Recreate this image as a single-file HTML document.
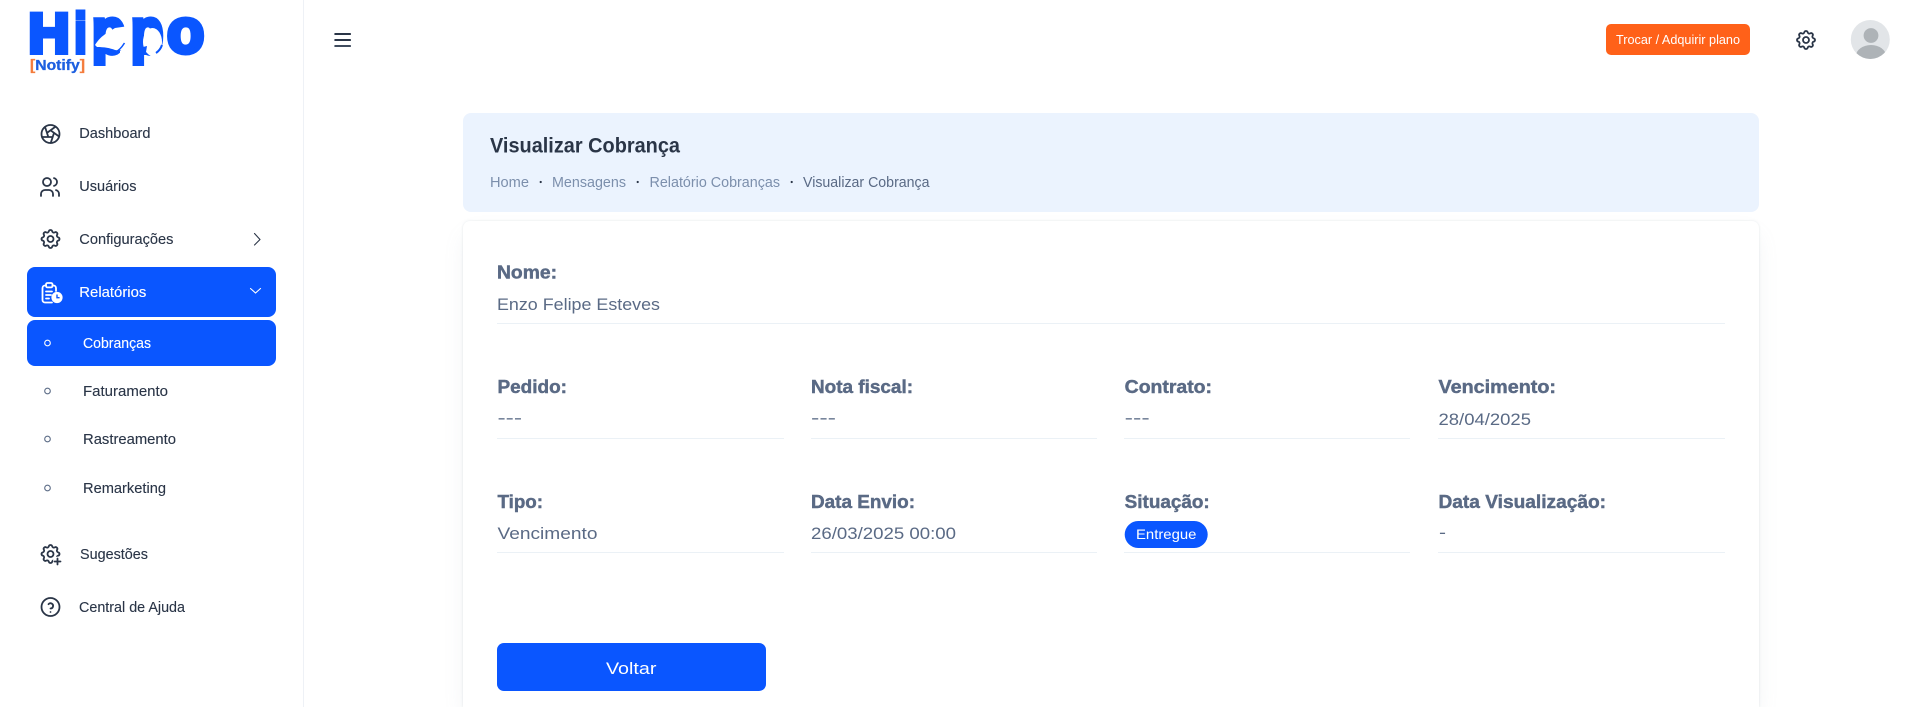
<!DOCTYPE html>
<html lang="pt-BR"><head><meta charset="utf-8"><title>Visualizar Cobrança</title>
<style>
html,body{margin:0;padding:0;width:1918px;height:707px;overflow:hidden;background:#fff}
#wrap{position:relative;width:1918px;height:707px;overflow:hidden;background:#fff}
#card{position:absolute;left:463px;top:221px;width:1296px;height:486px;background:#fff;border-radius:7px 7px 0 0;box-shadow:0 0 2px rgba(145,158,171,.25),0 12px 24px -4px rgba(145,158,171,.14)}
svg{position:absolute;left:0;top:0;display:block}
text{font-family:"Liberation Sans",sans-serif}
.n{font-size:15px;fill:#2a3547;stroke:#2a3547;stroke-width:.12}
.w{font-size:15px;fill:#fff;stroke:#fff;stroke-width:.12}
.l{font-size:18.5px;font-weight:700;fill:#5a6a85;stroke:#5a6a85;stroke-width:.45}
.v{font-size:17px;fill:#5a6a85}
.b{font-size:14.5px;fill:#7c8fac}
.i{fill:none;stroke:#2a3547;stroke-width:1.8;stroke-linecap:round;stroke-linejoin:round}
.logo{font-weight:700;fill:#0a56ff;stroke:#0a56ff;stroke-width:5}
</style></head><body>
<div id="wrap">
<div id="card"></div>
<svg width="1918" height="707" viewBox="0 0 1918 707" xmlns="http://www.w3.org/2000/svg">
<defs>
<path id="gear" d="M10.325 4.317c.426 -1.756 2.924 -1.756 3.35 0a1.724 1.724 0 0 0 2.573 1.066c1.543 -.94 3.31 .826 2.37 2.37a1.724 1.724 0 0 0 1.065 2.572c1.756 .426 1.756 2.924 0 3.35a1.724 1.724 0 0 0 -1.066 2.573c.94 1.543 -.826 3.31 -2.37 2.37a1.724 1.724 0 0 0 -2.572 1.065c-.426 1.756 -2.924 1.756 -3.35 0a1.724 1.724 0 0 0 -2.573 -1.066c-1.543 .94 -3.31 -.826 -2.37 -2.37a1.724 1.724 0 0 0 -1.065 -2.572c-1.756 -.426 -1.756 -2.924 0 -3.35a1.724 1.724 0 0 0 1.066 -2.573c-.94 -1.543 .826 -3.31 2.37 -2.37c1 .608 2.296 .07 2.572 -1.065z"/>
<clipPath id="av"><circle cx="1870.3" cy="39.5" r="19.5"/></clipPath>
</defs>

<!-- sidebar -->
<rect x="303" y="0" width="1" height="707" fill="#eef1f6"/>

<!-- logo -->
<text class="logo" x="28.5" y="52.5" font-size="56" textLength="41" lengthAdjust="spacingAndGlyphs">H</text>
<text class="logo" x="74.5" y="52.5" font-size="56" textLength="12" lengthAdjust="spacingAndGlyphs">i</text>
<text class="logo" x="92" y="52.5" font-size="62" textLength="33.5" lengthAdjust="spacingAndGlyphs">p</text>
<text class="logo" x="131" y="52.5" font-size="62" textLength="32.3" lengthAdjust="spacingAndGlyphs">p</text>
<text class="logo" x="167.1" y="52.5" font-size="62" textLength="37" lengthAdjust="spacingAndGlyphs">o</text>
<rect x="88" y="66" width="90" height="10" fill="#fff"/>
<path d="M95 45C98 40 102 36 107 33L115 28L129 26L129 46C125 50 120 51 115 50C110 48 104 47 97 47Z" fill="#fff"/>
<path d="M120 51L129 44L129 58L120 58Z" fill="#fff"/>
<path d="M115 52C119 51 122 47 124.5 43" fill="none" stroke="#0a56ff" stroke-width="1.5"/>
<ellipse cx="152.5" cy="42" rx="9.5" ry="14" fill="#fff"/>
<path d="M150 56L167 42L167 58L150 58Z" fill="#fff"/>
<path d="M143 47L147 46L146 52L149 55L143 55Z" fill="#0a56ff"/>
<path d="M156 53C159 51 161 48 162 45" fill="none" stroke="#0a56ff" stroke-width="2"/>
<text x="30" y="70" font-size="14.5" font-weight="700" fill="#1d5fe0" stroke="#1d5fe0" stroke-width=".3" textLength="55" lengthAdjust="spacingAndGlyphs"><tspan fill="#f47c3c" stroke="#f47c3c">[</tspan>Notify<tspan fill="#f47c3c" stroke="#f47c3c">]</tspan></text>

<!-- nav icons -->
<g class="i" transform="translate(38.5 122)"><circle cx="12" cy="12" r="9"/><path d="M3.6 15h10.55M6.551 4.938l3.26 10.034M17.032 4.636l-8.535 6.201M20.559 14.51l-8.535 -6.201M12.257 20.916l3.261 -10.034"/></g>
<g class="i" transform="translate(38 175)"><path d="M9 7m-4 0a4 4 0 1 0 8 0a4 4 0 1 0 -8 0M3 21v-2a4 4 0 0 1 4 -4h4a4 4 0 0 1 4 4v2M16 3.13a4 4 0 0 1 0 7.75M21 21v-2a4 4 0 0 0 -3 -3.85"/></g>
<g class="i" transform="translate(38.5 227)"><use href="#gear"/><circle cx="12" cy="12" r="3"/></g>
<path d="M254.5 233.5L260 239.5L254.5 245" fill="none" stroke="#2a3547" stroke-width="1.1" stroke-linecap="round" stroke-linejoin="round"/>

<rect x="27" y="267" width="249" height="50" rx="8" fill="#0a56ff"/>
<g fill="none" stroke="#fff" stroke-width="1.8" stroke-linecap="round" stroke-linejoin="round">
<path d="M46 285.5h-1a2.5 2.5 0 0 0 -2.5 2.5v12a2.5 2.5 0 0 0 2.5 2.5h7M52.5 285.5h1a2.5 2.5 0 0 1 2.5 2.5v3"/>
<rect x="46" y="283" width="6.5" height="4.4" rx="1.5"/>
<path d="M46 291.5h6M46 295h5M46 298.5h3"/>
</g>
<circle cx="57" cy="297.5" r="5.6" fill="#fff"/>
<path d="M57 294.5v3.2h2.6" fill="none" stroke="#0a56ff" stroke-width="1.4"/>
<path d="M250.5 288.5L255.5 293L260.5 288.5" fill="none" stroke="#fff" stroke-width="1.1" stroke-linecap="round"/>

<rect x="27" y="320" width="249" height="46" rx="8" fill="#0a56ff"/>
<circle cx="47.5" cy="343" r="2.8" fill="none" stroke="#fff" stroke-width="1.1"/>
<circle cx="47.5" cy="391" r="2.8" fill="none" stroke="#5a6a85" stroke-width="1.1"/>
<circle cx="47.5" cy="439" r="2.8" fill="none" stroke="#5a6a85" stroke-width="1.1"/>
<circle cx="47.5" cy="488" r="2.8" fill="none" stroke="#5a6a85" stroke-width="1.1"/>

<g class="i" transform="translate(38.5 542)"><use href="#gear"/><circle cx="12" cy="12" r="3"/><circle cx="19" cy="19" r="4.4" fill="#fff" stroke="none"/><path d="M16 19.5h6M19 16.5v6"/></g>
<g class="i" transform="translate(38.5 595)"><circle cx="12" cy="12" r="9"/><path d="M12 17v.01M12 13.5a2.6 2.6 0 0 0 1.2 -4.9a2.6 2.6 0 0 0 -3.2 .6"/></g>

<!-- nav text -->
<text class="n" x="79.3" y="138" textLength="71.2" lengthAdjust="spacingAndGlyphs">Dashboard</text>
<text class="n" x="79.3" y="191" textLength="57.2" lengthAdjust="spacingAndGlyphs">Usuários</text>
<text class="n" x="79.3" y="244" textLength="94.2" lengthAdjust="spacingAndGlyphs">Configurações</text>
<text class="w" x="79.3" y="297" textLength="67" lengthAdjust="spacingAndGlyphs">Relatórios</text>
<text class="w" x="83" y="348" textLength="68" lengthAdjust="spacingAndGlyphs">Cobranças</text>
<text class="n" x="83" y="396" textLength="85" lengthAdjust="spacingAndGlyphs">Faturamento</text>
<text class="n" x="83" y="444" textLength="93" lengthAdjust="spacingAndGlyphs">Rastreamento</text>
<text class="n" x="83" y="493" textLength="83" lengthAdjust="spacingAndGlyphs">Remarketing</text>
<text class="n" x="80" y="559" textLength="68" lengthAdjust="spacingAndGlyphs">Sugestões</text>
<text class="n" x="79" y="612" textLength="106" lengthAdjust="spacingAndGlyphs">Central de Ajuda</text>

<!-- topbar -->
<rect x="334.3" y="33" width="16.7" height="2" rx=".8" fill="#2a3547"/>
<rect x="334.3" y="39" width="16.7" height="2" rx=".8" fill="#2a3547"/>
<rect x="334.3" y="45" width="16.7" height="2" rx=".8" fill="#3f4b5e"/>

<rect x="1606" y="24" width="144" height="31" rx="5" fill="#ff6119"/>
<text x="1616" y="44" font-size="13" fill="#fff" textLength="124" lengthAdjust="spacingAndGlyphs">Trocar / Adquirir plano</text>
<g class="i" transform="translate(1794 28)"><use href="#gear"/><circle cx="12" cy="12" r="3"/></g>
<circle cx="1870.3" cy="39.5" r="19.5" fill="#e2e5e8"/>
<g clip-path="url(#av)"><circle cx="1871" cy="35.5" r="7.4" fill="#aeb3b7"/><ellipse cx="1871" cy="56" rx="15" ry="11" fill="#aeb3b7"/></g>

<!-- page header -->
<rect x="463" y="113" width="1296" height="99" rx="8" fill="#ebf3fe"/>
<text x="490" y="152.5" font-size="21" font-weight="700" fill="#2a3547" textLength="190" lengthAdjust="spacingAndGlyphs">Visualizar Cobrança</text>
<text class="b" x="490" y="187" textLength="39" lengthAdjust="spacingAndGlyphs">Home</text>
<circle cx="540.7" cy="182" r="1.1" fill="#2a3547"/>
<text class="b" x="552" y="187" textLength="74" lengthAdjust="spacingAndGlyphs">Mensagens</text>
<circle cx="637.7" cy="182" r="1.1" fill="#2a3547"/>
<text class="b" x="649.5" y="187" textLength="130.5" lengthAdjust="spacingAndGlyphs">Relatório Cobranças</text>
<circle cx="791.7" cy="182" r="1.1" fill="#2a3547"/>
<text class="b" x="803" y="187" textLength="126.5" lengthAdjust="spacingAndGlyphs" style="fill:#5a6a85">Visualizar Cobrança</text>

<!-- card content -->
<text class="l" x="497" y="278.5" textLength="60" lengthAdjust="spacingAndGlyphs">Nome:</text>
<text class="v" x="497" y="310" textLength="163" lengthAdjust="spacingAndGlyphs">Enzo Felipe Esteves</text>
<rect x="497" y="323" width="1228" height="1" fill="#ebf1f6"/>

<text class="l" x="497.5" y="393" textLength="69.5" lengthAdjust="spacingAndGlyphs">Pedido:</text>
<text class="v" x="497.5" y="423.5" textLength="24.5" lengthAdjust="spacingAndGlyphs">---</text>
<rect x="497" y="438" width="287" height="1" fill="#ebf1f6"/>
<text class="l" x="811" y="393" textLength="102" lengthAdjust="spacingAndGlyphs">Nota fiscal:</text>
<text class="v" x="811" y="423.5" textLength="25" lengthAdjust="spacingAndGlyphs">---</text>
<rect x="811" y="438" width="286" height="1" fill="#ebf1f6"/>
<text class="l" x="1124.7" y="393" textLength="87.3" lengthAdjust="spacingAndGlyphs">Contrato:</text>
<text class="v" x="1124.7" y="423.5" textLength="25" lengthAdjust="spacingAndGlyphs">---</text>
<rect x="1124" y="438" width="286" height="1" fill="#ebf1f6"/>
<text class="l" x="1438.5" y="393" textLength="117.5" lengthAdjust="spacingAndGlyphs">Vencimento:</text>
<text class="v" x="1438.5" y="425" textLength="92.5" lengthAdjust="spacingAndGlyphs">28/04/2025</text>
<rect x="1438" y="438" width="287" height="1" fill="#ebf1f6"/>

<text class="l" x="497.5" y="508" textLength="45.5" lengthAdjust="spacingAndGlyphs">Tipo:</text>
<text class="v" x="497.5" y="539" textLength="100" lengthAdjust="spacingAndGlyphs">Vencimento</text>
<rect x="497" y="552" width="287" height="1" fill="#ebf1f6"/>
<text class="l" x="811" y="508" textLength="104" lengthAdjust="spacingAndGlyphs">Data Envio:</text>
<text class="v" x="811" y="539" textLength="145" lengthAdjust="spacingAndGlyphs">26/03/2025 00:00</text>
<rect x="811" y="552" width="286" height="1" fill="#ebf1f6"/>
<text class="l" x="1124.7" y="508" textLength="85" lengthAdjust="spacingAndGlyphs">Situação:</text>
<rect x="1124" y="552" width="286" height="1" fill="#ebf1f6"/>
<rect x="1124.7" y="521" width="83" height="27" rx="13.5" fill="#0a56ff"/>
<text x="1136" y="539" font-size="14" fill="#fff" textLength="60.4" lengthAdjust="spacingAndGlyphs">Entregue</text>
<text class="l" x="1438.5" y="508" textLength="167.5" lengthAdjust="spacingAndGlyphs">Data Visualização:</text>
<text class="v" x="1439" y="538" textLength="7" lengthAdjust="spacingAndGlyphs">-</text>
<rect x="1438" y="552" width="287" height="1" fill="#ebf1f6"/>

<rect x="497" y="643" width="269" height="48" rx="7" fill="#0a56ff"/>
<text x="606" y="674" font-size="17" fill="#fff" textLength="50.4" lengthAdjust="spacingAndGlyphs">Voltar</text>
</svg>
</div>
</body></html>
